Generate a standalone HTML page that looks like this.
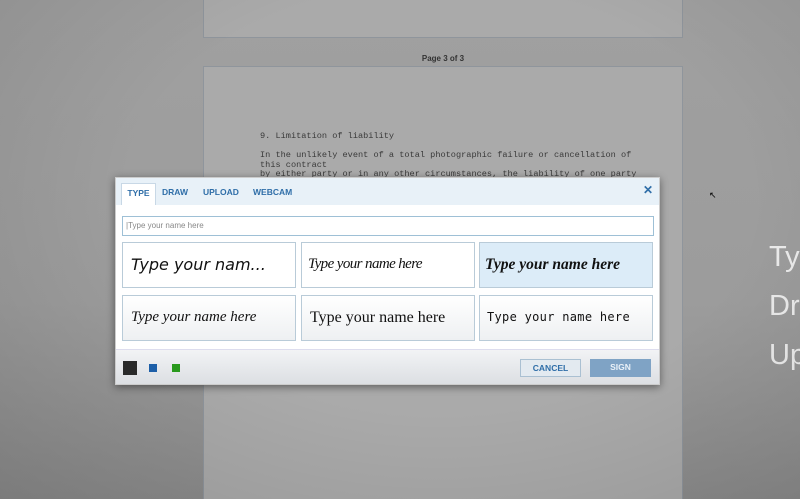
<!DOCTYPE html>
<html style="width:800px;height:499px;overflow:hidden;background:#9c9c9c"><head><meta charset="utf-8"><style>
*{margin:0;padding:0;box-sizing:border-box}
body{width:800px;height:499px;overflow:hidden;position:relative;font-family:"Liberation Sans",sans-serif;
background:linear-gradient(180deg,#a0a0a0 0%,#9c9c9c 60%,#8c8c8c 100%);}
.vig{position:absolute;inset:0;background:radial-gradient(ellipse at 55% 40%,rgba(0,0,0,0) 50%,rgba(0,0,0,.12) 100%);pointer-events:none}
.page{position:absolute;left:203px;width:480px;background:#aaaaaa;border:1px solid #8f959c;}
.p1{top:-2px;height:40px}
.p2{top:66px;height:433px;border-bottom:none}
.plabel{position:absolute;left:0;width:886px;top:54px;text-align:center;font-size:8px;font-weight:bold;color:#333}
.mono{position:absolute;left:260px;font-family:"Liberation Mono",monospace;font-size:8.6px;color:#3a3a3a;line-height:9.5px;white-space:pre}
.dlg{position:absolute;left:115px;top:177px;width:545px;height:208px;background:#fff;box-shadow:0 2px 8px rgba(0,0,0,.45);border:1px solid #ccc}
.tabs{height:27px;background:#e8f1f8;position:relative}
.tab{position:absolute;top:9px;font-size:8.5px;font-weight:bold;color:#2f6ea8}
.tab.on{top:5px;left:5px;height:22px;width:35px;padding:4px 0 0;text-align:center;background:#fff;border:1px solid #c8d8e6;border-bottom:none}
.x{position:absolute;right:6px;top:5px;font-size:12px;font-weight:bold;color:#2f6ea8}
.inp{position:absolute;left:6px;top:38px;width:532px;height:20px;border:1px solid #9ec0d6;font-size:8px;color:#888;padding:4px 3px}
.box{position:absolute;width:174px;height:46px;border:1px solid #b9cbd8;background:#fff;overflow:hidden;white-space:nowrap;color:#111;padding:12px 0 0 8px}
.box2{background:linear-gradient(#fff,#eef0f2)}
.foot{position:absolute;left:0;right:0;bottom:0;height:35px;background:linear-gradient(#f2f3f5,#dcdfe3);border-top:1px solid #dde}
.sw{position:absolute}
.btn{position:absolute;top:9px;height:18px;font-size:8.5px;font-weight:bold;text-align:center;line-height:17px}
.side{position:absolute;left:769px;color:#ececec;font-size:29px;line-height:49px;top:233px}
</style></head><body>
<div class="page p1"></div>
<div class="plabel">Page 3 of 3</div>
<div class="page p2"></div>
<div class="mono" style="top:132px">9. Limitation of liability

In the unlikely event of a total photographic failure or cancellation of
this contract
by either party or in any other circumstances, the liability of one party</div>
<div class="side">Ty<br>Dr<br>Up</div>
<div style="position:absolute;left:709px;top:190px;font-size:9px;color:#000">&#x2196;</div>
<div class="vig"></div>
<div class="dlg">
 <div class="tabs">
  <div class="tab on">TYPE</div>
  <div class="tab" style="left:46px">DRAW</div>
  <div class="tab" style="left:87px">UPLOAD</div>
  <div class="tab" style="left:137px">WEBCAM</div>
  <div class="x">✕</div>
 </div>
 <div class="inp">|Type your name here</div>
 <div class="box" style="left:6px;top:64px;font-family:'DejaVu Sans',cursive;font-style:italic;font-size:16px">Type your nam...</div>
 <div class="box" style="left:185px;top:64px;font-family:'Liberation Serif',cursive;font-style:italic;font-size:15px;letter-spacing:-.6px;padding-left:6px;padding-top:13px">Type your name here</div>
 <div class="box" style="left:363px;top:64px;background:#dcecf8;font-family:'Liberation Serif',cursive;font-style:italic;font-weight:bold;font-size:15.5px;padding-left:5px;padding-top:13px">Type your name here</div>
 <div class="box box2" style="left:6px;top:117px;font-family:'Liberation Serif',cursive;font-style:italic;font-size:15px;padding-top:13px">Type your name here</div>
 <div class="box box2" style="left:185px;top:117px;font-family:'Liberation Serif',cursive;font-size:16px;padding-top:13px">Type your name here</div>
 <div class="box box2" style="left:363px;top:117px;font-family:'DejaVu Sans Mono',monospace;font-size:12px;letter-spacing:.3px;padding-top:14px;padding-left:7px">Type your name here</div>
 <div class="foot">
  <div class="sw" style="left:7px;top:11px;width:14px;height:14px;background:#2a2a2a"></div>
  <div class="sw" style="left:33px;top:14px;width:8px;height:8px;background:#1d5fa8"></div>
  <div class="sw" style="left:56px;top:14px;width:8px;height:8px;background:#2a9a1e"></div>
  <div class="btn" style="left:404px;width:61px;border:1px solid #aac0d2;background:#e3eaf0;color:#2f6ea8">CANCEL</div>
  <div class="btn" style="left:474px;width:61px;background:#7fa3c5;color:#eaf1f8">SIGN</div>
 </div>
</div>
</body></html>
